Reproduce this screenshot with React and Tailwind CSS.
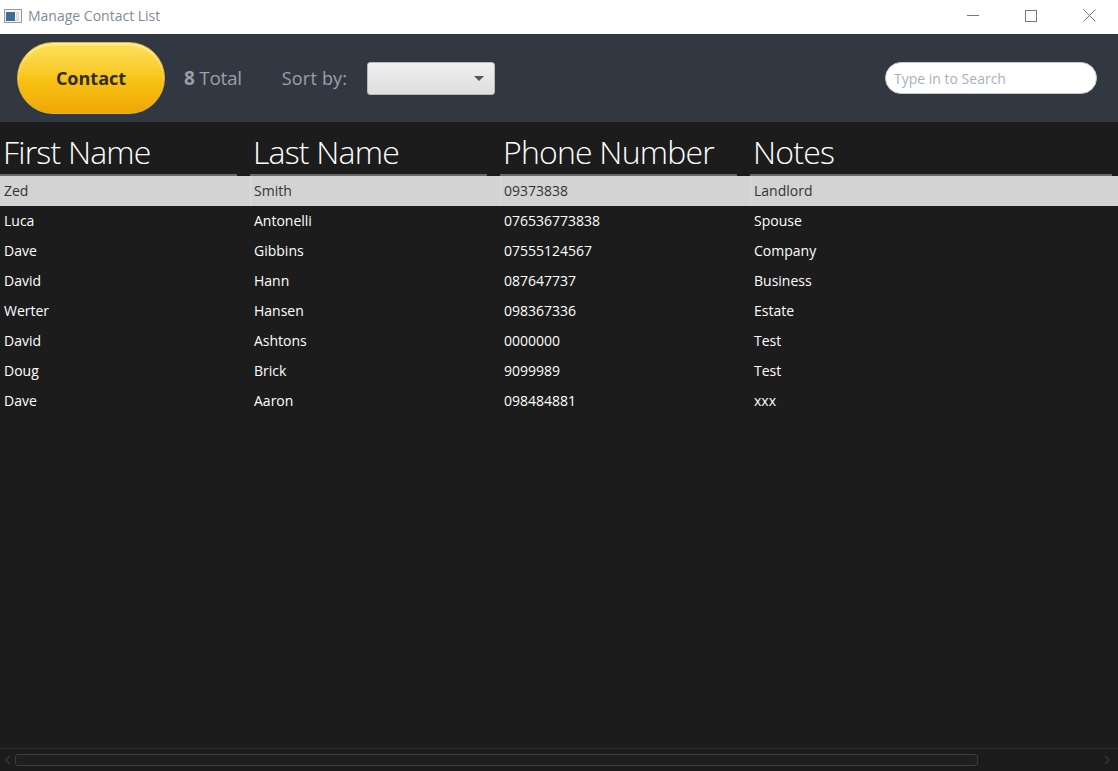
import React from "react";

const rows = [
  ["Zed", "Smith", "09373838", "Landlord"],
  ["Luca", "Antonelli", "076536773838", "Spouse"],
  ["Dave", "Gibbins", "07555124567", "Company"],
  ["David", "Hann", "087647737", "Business"],
  ["Werter", "Hansen", "098367336", "Estate"],
  ["David", "Ashtons", "0000000", "Test"],
  ["Doug", "Brick", "9099989", "Test"],
  ["Dave", "Aaron", "098484881", "xxx"],
];

const columns = ["First Name", "Last Name", "Phone Number", "Notes"];

const font = { fontFamily: "'Open Sans', 'Noto Sans', sans-serif" };

const TitleBar = () => (
  <div className="h-[34px] bg-white flex items-center pb-[3px]">
    <svg width="18" height="14" viewBox="0 0 18 14" className="ml-[4px]">
      <rect x="0.5" y="0.5" width="17" height="13" fill="#f4f4f4" stroke="#9a9a9a" />
      <rect x="2" y="3" width="9" height="9" fill="#3e6e95" />
      <rect x="12" y="3" width="3" height="9" fill="#d9dde2" />
    </svg>
    <span className="ml-[6px] text-[14px] text-[#7f8c98]">Manage Contact List</span>
    <div className="ml-auto flex items-center h-full">
      <div className="w-[58px] h-full flex items-center justify-center">
        <div className="w-[12px] h-px bg-[#777]" />
      </div>
      <div className="w-[58px] h-full flex items-center justify-center">
        <div className="w-[12px] h-[12px] border border-[#777]" />
      </div>
      <div className="w-[58px] h-full flex items-center justify-center">
        <svg width="13" height="13" viewBox="0 0 13 13">
          <path d="M0.5 0.5 L12.5 12.5 M12.5 0.5 L0.5 12.5" stroke="#777" strokeWidth="1" />
        </svg>
      </div>
    </div>
  </div>
);

const Toolbar = () => (
  <div className="h-[88px] bg-[#323841] flex items-center">
    <button className="ml-[17px] w-[148px] h-[72px] rounded-full border border-[#e8b430] bg-gradient-to-b from-[#fde25a] via-[#f8c514] to-[#efa606] shadow-[inset_0_2px_2px_rgba(255,255,255,0.5)] text-[18px] font-bold text-[#2f2d2a]">
      Contact
    </button>
    <div className="ml-[19px] text-[19px] text-[#9ba0a6] tracking-[-0.3px]">
      <span className="font-bold">8</span> Total
    </div>
    <div className="ml-[40px] text-[18px] text-[#9ba0a6] tracking-[0.2px]">Sort by:</div>
    <div className="ml-[20px] w-[128px] h-[33px] rounded-[3px] border border-[#b8b8b8] bg-gradient-to-b from-[#f0f0f0] to-[#dedede] flex items-center justify-end pr-[10px]">
      <div className="w-0 h-0 border-l-[5px] border-r-[5px] border-t-[5px] border-l-transparent border-r-transparent border-t-[#555]" />
    </div>
    <div className="ml-auto mr-[21px] w-[212px] h-[32px] rounded-full bg-white border border-[#c8c8c8] flex items-center px-[8px]">
      <span className="text-[14px] text-[#a9b1b8]">Type in to Search</span>
    </div>
  </div>
);

const Table = () => (
  <div className="flex-1 bg-[#1c1c1c] flex flex-col">
    <div className="h-[54px] grid grid-cols-[250px_250px_250px_1fr]">
      {columns.map((c, i) => (
        <div key={c} className={`flex flex-col justify-end ${i === 3 ? "pr-[6px]" : "pr-[13px]"}`}>
          <div className="pl-[3px] text-[32px] font-light leading-none text-white tracking-[-0.8px] pb-[6px]">{c}</div>
          <div className="h-[2px] bg-[#6a6a6a]" />
        </div>
      ))}
    </div>
    <div className="flex-1">
      {rows.map((r, i) => (
        <div
          key={i}
          className={`h-[30px] grid grid-cols-[250px_250px_250px_1fr] items-center text-[14px] ${
            i === 0 ? "bg-[#d3d3d3] text-[#333]" : "text-white"
          }`}
        >
          {r.map((v, j) => (
            <div
              key={j}
              className={`h-full flex items-center pb-[2px] ${
                i === 0 && j > 0 ? "border-l border-[#dcdcdc] pl-[3px]" : "pl-[4px]"
              }`}
            >
              {v}
            </div>
          ))}
        </div>
      ))}
    </div>
    <div className="h-[23px] border-t border-[#2c2c2c] flex items-center">
      <div className="w-[15px] flex items-center justify-center">
        <svg width="6" height="10" viewBox="0 0 6 10">
          <path d="M5 1 L1 5 L5 9" stroke="#3a3a3a" strokeWidth="1.2" fill="none" />
        </svg>
      </div>
      <div className="w-[963px] h-[12px] rounded-[3px] border border-[#3c3c3c] bg-[#1f1f1f]" />
      <div className="flex-1" />
      <div className="w-[15px] flex items-center justify-center mr-[4px]">
        <svg width="6" height="10" viewBox="0 0 6 10">
          <path d="M1 1 L5 5 L1 9" stroke="#3a3a3a" strokeWidth="1.2" fill="none" />
        </svg>
      </div>
    </div>
  </div>
);

export default function App() {
  return (
    <div className="w-[1118px] h-[771px] flex flex-col overflow-hidden" style={font}>
      <TitleBar />
      <Toolbar />
      <Table />
    </div>
  );
}
